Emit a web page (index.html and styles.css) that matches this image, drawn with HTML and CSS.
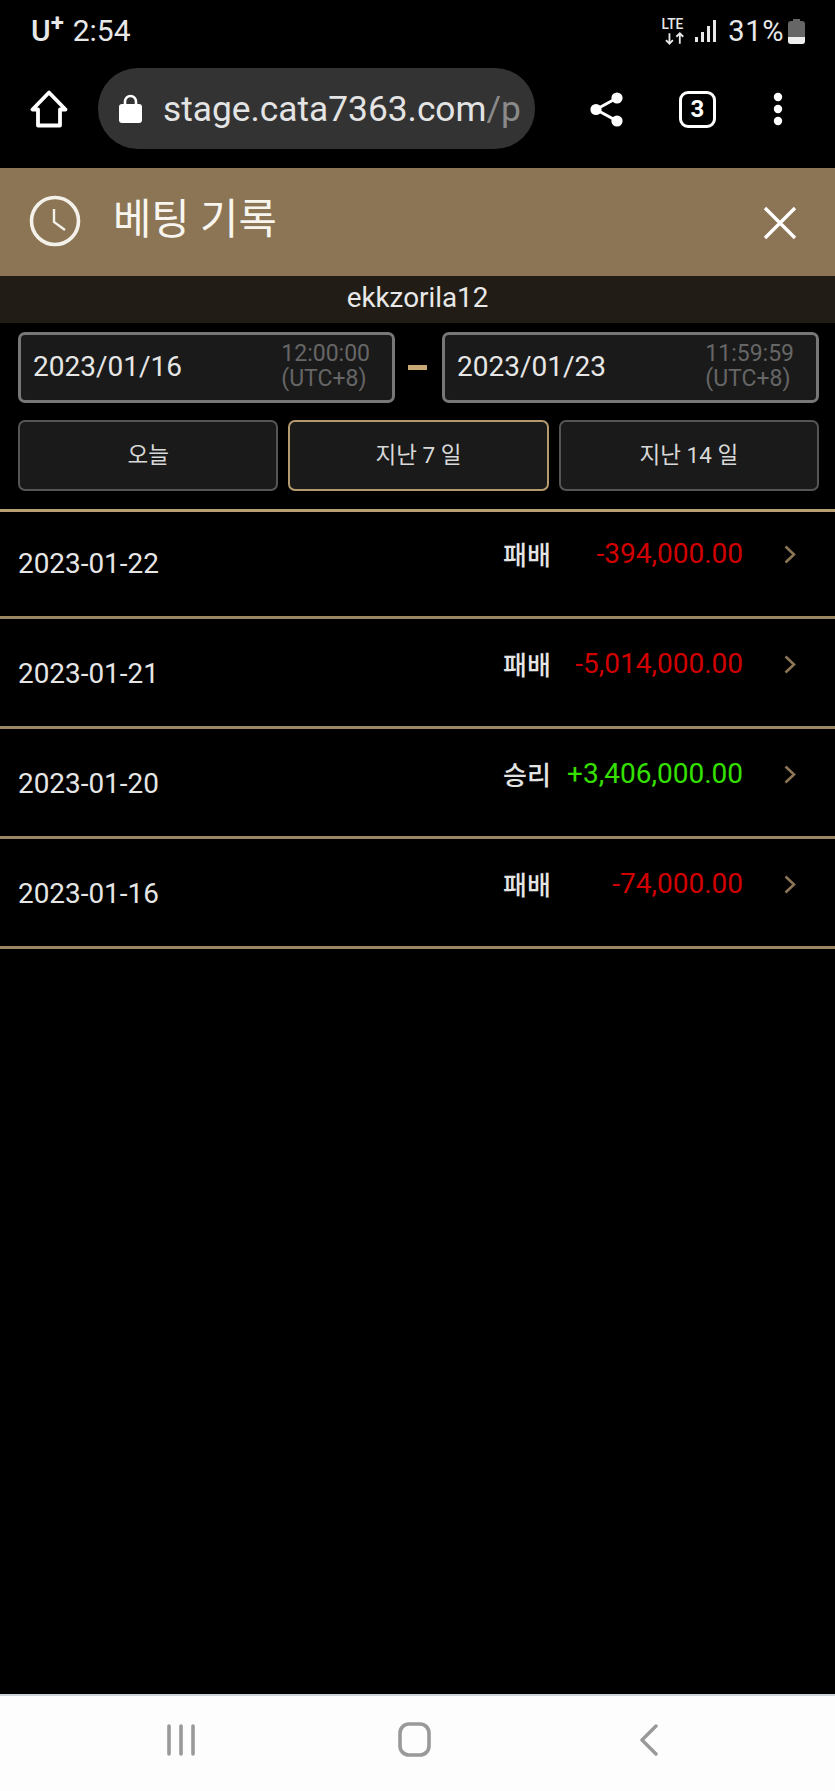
FILE: index.html
```html
<!DOCTYPE html>
<html lang="ko">
<head>
<meta charset="utf-8">
<title>베팅 기록</title>
<link rel="stylesheet" href="styles.css">
</head>
<body>
<div class="screen">
  <div class="status">
    <div class="status-left"><span class="carrier">U<sup>+</sup></span><span class="clock-text">2:54</span></div>
    <div class="status-right">
      <svg class="ic-lte" width="24" height="26" viewBox="0 0 24 26"><text x="0" y="11" class="lte-text">LTE</text><path d="M7 15v9M4 21l3 3 3-3M16 24v-9M13 18l3-3 3 3" fill="none" stroke="#e8e8e8" stroke-width="1.6"/></svg>
      <svg class="ic-signal" width="22" height="24" viewBox="0 0 22 24"><g fill="#e8e8e8"><rect x="0" y="18" width="3" height="5"/><rect x="6" y="13" width="3" height="10"/><rect x="12" y="7" width="3" height="16"/><rect x="18" y="1" width="3" height="22"/></g></svg>
      <span class="battery-text">31%</span>
      <svg class="ic-battery" width="17" height="25" viewBox="0 0 17 25"><path d="M5 0h7v2h2a3 3 0 0 1 3 3v17a3 3 0 0 1-3 3H3a3 3 0 0 1-3-3V5a3 3 0 0 1 3-3h2z" fill="#666"/><path d="M0 18h17v4a3 3 0 0 1-3 3H3a3 3 0 0 1-3-3z" fill="#eee"/></svg>
    </div>
  </div>

  <div class="toolbar">
    <svg class="ic-home" width="38" height="38" viewBox="0 0 38 38"><path d="M19 2.500 2.500 19.500H8V35.500H30V19.500H35.500Z" fill="none" stroke="#fff" stroke-width="3.800" stroke-linejoin="round"/></svg>
    <div class="omnibox">
      <svg class="ic-lock" width="23" height="29" viewBox="0 0 23 29"><path d="M6 12V7.500a5.500 5.500 0 0 1 11 0V12" fill="none" stroke="#fff" stroke-width="2.600"/><rect x="0" y="10" width="23" height="19" rx="3" fill="#fff"/></svg>
      <span class="url">stage.cata7363.com<span class="url-dim">/p</span></span>
    </div>
    <svg class="ic-share" width="33" height="35" viewBox="0 0 33 35"><g fill="#fff"><circle cx="6" cy="17.500" r="5.600"/><circle cx="27" cy="6" r="5.600"/><circle cx="27" cy="29" r="5.600"/></g><path d="M27 6 6 17.500 27 29" fill="none" stroke="#fff" stroke-width="3"/></svg>
    <div class="tabs-count">3</div>
    <svg class="ic-dots" width="12" height="36" viewBox="0 0 12 36"><g fill="#fff"><circle cx="6" cy="6" r="4.200"/><circle cx="6" cy="18" r="4.200"/><circle cx="6" cy="30" r="4.200"/></g></svg>
  </div>

  <header class="title-bar">
    <div class="title-left">
      <svg class="ic-clock" width="52" height="52" viewBox="0 0 52 52"><circle cx="26" cy="26" r="23.500" fill="none" stroke="#f4f1ea" stroke-width="3.600"/><path d="M25 14V27L36 35" fill="none" stroke="#f4f1ea" stroke-width="2.400"/></svg>
      <h1 class="title">베팅 기록</h1>
    </div>
    <svg class="ic-close" width="34" height="34" viewBox="0 0 34 34"><path d="M2 2 32 32M32 2 2 32" stroke="#fff" stroke-width="3.400" fill="none"/></svg>
  </header>

  <div class="user-bar">ekkzorila12</div>

  <div class="filters">
    <div class="date-row">
      <div class="date-box">
        <span class="date-value">2023/01/16</span>
        <span class="date-time">12:00:00<br>(UTC+8)</span>
      </div>
      <div class="date-dash"></div>
      <div class="date-box">
        <span class="date-value">2023/01/23</span>
        <span class="date-time">11:59:59<br>(UTC+8)</span>
      </div>
    </div>
    <div class="range-row">
      <div class="range-btn">오늘</div>
      <div class="range-btn range-active">지난 7 일</div>
      <div class="range-btn">지난 14 일</div>
    </div>
  </div>

  <main class="records">
    <div class="record">
      <span class="record-date">2023-01-22</span>
      <div class="record-right">
        <span class="record-result">패배</span>
        <span class="record-amount loss">-394,000.00</span>
        <svg class="ic-chevron" width="12" height="19" viewBox="0 0 12 19"><path d="M1.500 1.500 10 9.500 1.500 17.500" fill="none" stroke="#8b7555" stroke-width="2.600"/></svg>
      </div>
    </div>
    <div class="record">
      <span class="record-date">2023-01-21</span>
      <div class="record-right">
        <span class="record-result">패배</span>
        <span class="record-amount loss">-5,014,000.00</span>
        <svg class="ic-chevron" width="12" height="19" viewBox="0 0 12 19"><path d="M1.500 1.500 10 9.500 1.500 17.500" fill="none" stroke="#8b7555" stroke-width="2.600"/></svg>
      </div>
    </div>
    <div class="record">
      <span class="record-date">2023-01-20</span>
      <div class="record-right">
        <span class="record-result">승리</span>
        <span class="record-amount win">+3,406,000.00</span>
        <svg class="ic-chevron" width="12" height="19" viewBox="0 0 12 19"><path d="M1.500 1.500 10 9.500 1.500 17.500" fill="none" stroke="#8b7555" stroke-width="2.600"/></svg>
      </div>
    </div>
    <div class="record">
      <span class="record-date">2023-01-16</span>
      <div class="record-right">
        <span class="record-result">패배</span>
        <span class="record-amount loss">-74,000.00</span>
        <svg class="ic-chevron" width="12" height="19" viewBox="0 0 12 19"><path d="M1.500 1.500 10 9.500 1.500 17.500" fill="none" stroke="#8b7555" stroke-width="2.600"/></svg>
      </div>
    </div>
  </main>

  <nav class="nav-bar">
    <svg width="30" height="32" viewBox="0 0 30 32"><path d="M3 2V30M15 2V30M27 2V30" stroke="#999" stroke-width="3.600" stroke-linecap="round" fill="none"/></svg>
    <svg class="nav-home" width="33" height="35" viewBox="0 0 33 35"><rect x="2" y="2" width="29" height="31" rx="9" fill="none" stroke="#999" stroke-width="3.600"/></svg>
    <svg width="18" height="32" viewBox="0 0 18 32"><path d="M16 2 2 16 16 30" stroke="#999" stroke-width="3.400" stroke-linecap="round" stroke-linejoin="round" fill="none"/></svg>
  </nav>
</div>
</body>
</html>
```

FILE: styles.css
```css
* { box-sizing: border-box; }
html, body { margin: 0; padding: 0; background: #000; }
body { font-family: Roboto, "Noto Sans CJK KR", sans-serif; color: #eee; }
.screen { width: 835px; height: 1791px; display: flex; flex-direction: column; overflow: hidden; background: #000; }

.status { height: 58px; flex: none; display: flex; justify-content: space-between; align-items: center; padding: 4px 30px 0 31px; color: #e8e8e8; }
.status-left { display: flex; align-items: center; gap: 9px; font-size: 30px; }
.carrier { line-height: 1; font-weight: 500; }
.carrier sup { font-size: 24px; font-weight: 700; line-height: 0; vertical-align: 10px; }
.clock-text { line-height: 1; }
.status-right { display: flex; align-items: center; }
.ic-lte { transform: scale(1.150); transform-origin: right center; margin-right: -4px; }
.lte-text { font: 500 12px Roboto, sans-serif; fill: #e8e8e8; }
.ic-signal { margin-left: 10px; }
.battery-text { font-size: 29px; line-height: 1; margin-left: 11px; letter-spacing: 0.600px; }
.ic-battery { margin-left: 4px; }

.toolbar { height: 110px; flex: none; display: flex; align-items: center; padding: 0 0 8px 30px; }
.ic-home { flex: none; margin-top: -1px; }
.omnibox { width: 437px; height: 81px; margin-left: 30px; margin-top: -1px; background: #333; border-radius: 40px; display: flex; align-items: center; padding-left: 21px; flex: none; overflow: hidden; }
.ic-lock { flex: none; }
.url { margin-left: 21px; font-size: 35.300px; color: #e4e4e4; white-space: nowrap; }
.url-dim { color: #8a8a8a; }
.ic-share { margin-left: 55px; flex: none; }
.tabs-count { margin-left: 56px; flex: none; width: 37px; height: 37px; border: 3.500px solid #fff; border-radius: 9px; font-size: 24px; font-weight: 700; display: flex; align-items: center; justify-content: center; color: #fff; }
.ic-dots { margin-left: 56px; flex: none; }

.title-bar { height: 108px; flex: none; background: #8b7555; display: flex; justify-content: space-between; align-items: center; padding: 0 38px 0 29px; }
.title-left { display: flex; align-items: center; gap: 32px; margin-top: -2px; }
.title { margin: -2px 0 0; font-size: 41.700px; font-weight: 400; line-height: 1.200; color: #f8f5ef; }
.ic-close { margin-top: 1px; }

.user-bar { height: 47px; flex: none; background: #211c15; display: flex; align-items: center; justify-content: center; padding-bottom: 4px; font-size: 27.800px; color: #e8e8e8; }

.filters { flex: none; padding: 9px 16px 0 18px; display: flex; flex-direction: column; gap: 17px; }
.date-row { display: flex; align-items: center; }
.date-box { flex: none; width: 377px; height: 71px; background: #1a1a1a; border: 3px solid #777; border-radius: 7px; display: flex; justify-content: space-between; align-items: center; padding: 0 22px 3px 12px; }
.date-value { font-size: 28px; color: #e6e6e6; }
.date-time { font-size: 23px; line-height: 25px; color: #666; text-align: left; }
.date-dash { flex: 1; height: 5px; margin: 0 15px 0 13px; background: #c9a878; }
.range-row { display: flex; gap: 10px; }
.range-btn { flex: 1; height: 71px; background: #1a1a1a; border: 2px solid #555; border-radius: 7px; display: flex; align-items: center; justify-content: center; padding-bottom: 6px; font-size: 22.500px; color: #d8d8d8; }
.range-active { border-color: #b59a6f; }

.records { flex: 1; margin-top: 18px; }
.record { height: 110px; border-top: 3px solid #9c8763; display: flex; justify-content: space-between; padding: 0 39px 0 18px; }
.record:first-child { height: 107px; border-top-color: #b9a073; }
.record:first-child .record-date { margin-top: 32px; }
.record:first-child .record-right { margin-top: 21px; }
.record:last-child { border-bottom: 3px solid #9c8763; height: 113px; }
.record-date { font-size: 27.900px; color: #e6e6e6; margin-top: 35px; line-height: 40px; }
.record-right { display: flex; align-items: center; height: 40px; margin-top: 24px; }
.record-result { font-size: 26px; font-weight: 500; color: #e4e4e4; width: 50px; }
.record-amount { width: 190px; text-align: right; font-size: 28px; }
.loss { color: #d00000; }
.win { color: #35e000; }
.ic-chevron { margin-left: 41px; margin-top: 3px; }

.nav-bar { height: 97px; flex: none; background: #fdfdfd; border-top: 2px solid #cfd3da; display: flex; align-items: center; padding: 0 177px 8px 166px; justify-content: space-between; }
.nav-home { margin-right: 7px; }
```
